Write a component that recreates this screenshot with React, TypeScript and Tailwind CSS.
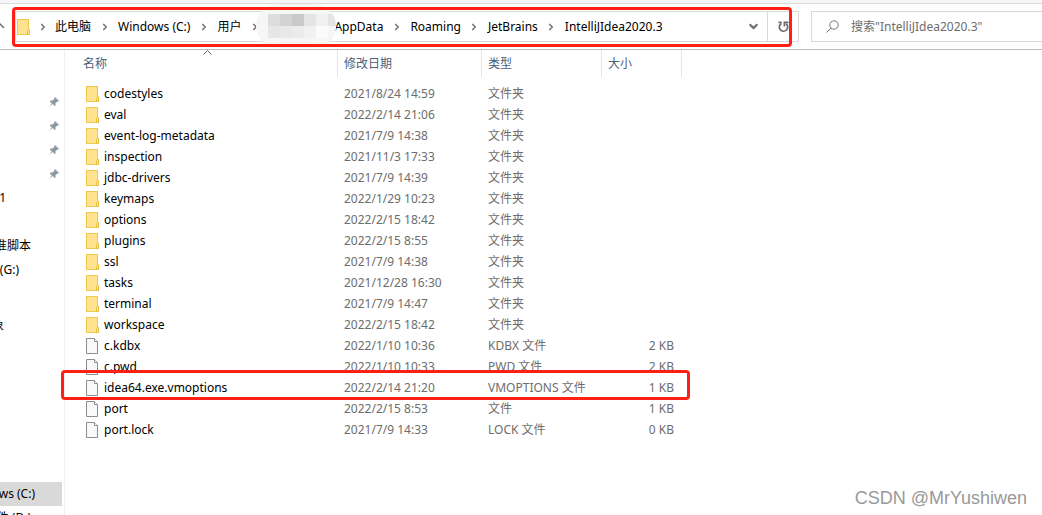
import React from 'react';
import { ChevronDown, ChevronRight } from 'lucide-react';

interface FileItem {
  name: string;
  date: string;
  type: string;
  size?: string;
  isFolder?: boolean;
  marked?: boolean;
}

const folder = (name: string, date: string): FileItem => ({ name, date, type: '文件夹', isFolder: true });

const files: FileItem[] = [
  folder('codestyles', '2021/8/24 14:59'),
  folder('eval', '2022/2/14 21:06'),
  folder('event-log-metadata', '2021/7/9 14:38'),
  folder('inspection', '2021/11/3 17:33'),
  folder('jdbc-drivers', '2021/7/9 14:39'),
  folder('keymaps', '2022/1/29 10:23'),
  folder('options', '2022/2/15 18:42'),
  folder('plugins', '2022/2/15 8:55'),
  folder('ssl', '2021/7/9 14:38'),
  folder('tasks', '2021/12/28 16:30'),
  folder('terminal', '2021/7/9 14:47'),
  folder('workspace', '2022/2/15 18:42'),
  { name: 'c.kdbx', date: '2022/1/10 10:36', type: 'KDBX 文件', size: '2 KB' },
  { name: 'c.pwd', date: '2022/1/10 10:33', type: 'PWD 文件', size: '2 KB' },
  { name: 'idea64.exe.vmoptions', date: '2022/2/14 21:20', type: 'VMOPTIONS 文件', size: '1 KB', marked: true },
  { name: 'port', date: '2022/2/15 8:53', type: '文件', size: '1 KB' },
  { name: 'port.lock', date: '2021/7/9 14:33', type: 'LOCK 文件', size: '0 KB' },
];

// shades of the pixelated user name, row by row
const mosaic = [
  '#dddddd', '#d3d3d3', '#c9c9c9', '#e4e4e4', '#f1f1f1', '#e4e4e4',
  '#e6e6e6', '#e8e8e8', '#ebebeb', '#f1f1f1', '#fbfbfb', '#f6f6f6',
];

const FolderIcon = () => (
  <svg width="14" height="16" viewBox="0 0 14 16" className="shrink-0">
    <rect x="0.5" y="0.5" width="11" height="15" fill="#ffe38f" stroke="#ecc84e" />
    <path d="M10.5 15.5v-4l1-1h1v5z" fill="#ffe9a5" stroke="#e5bd3f" />
  </svg>
);

const FileIcon = () => (
  <svg width="14" height="16" viewBox="0 0 14 16" className="shrink-0">
    <path d="M0.5 0.5h8l3 3v12h-11z" fill="#f8f9fa" stroke="#8e8e8e" />
    <path d="M8.5 0.5v3h3" fill="#ffffff" stroke="#8e8e8e" />
  </svg>
);

const PinIcon = () => (
  <svg width="10" height="10" viewBox="0 0 10 10" fill="#8d99a3">
    <path d="M6 0l4 4-1 .8-.8-.2-1.8 1.8.2 1.8-.9.9-2.1-2L0 10l2.8-3.6-2-2.1.9-.9 1.8.2 1.9-1.8L5.2.9z" />
  </svg>
);

const Separator = ({ width = 'w-[27px]' }: { width?: string }) => (
  <span className={`flex shrink-0 justify-center text-[#757575] ${width}`}>
    <ChevronRight size={10} strokeWidth={4} />
  </span>
);

const Crumb = ({ label }: { label: string }) => (
  <button className="shrink-0 whitespace-nowrap text-black">{label}</button>
);

const SideItem = ({ label, width, selected }: { label?: string; width?: string; selected?: boolean }) => (
  <li className={`h-6 ${selected ? 'mr-[2px] bg-[#d9d9d9]' : ''}`}>
    {label && (
      <a href="#" className={`flex h-6 items-center justify-end overflow-hidden whitespace-nowrap text-black ${width}`}>
        {label}
      </a>
    )}
  </li>
);

const PinnedItem = () => (
  <li className="flex h-6 items-center justify-end pr-[5px]">
    <PinIcon />
  </li>
);

const AddressBar = () => (
  <div className="relative flex h-[31px] flex-1 items-center border border-[#d9d9d9]">
    <div className="flex flex-1 items-center pl-px">
      <FolderIcon />
      <Separator width="w-6" />
      <Crumb label="此电脑" />
      <Separator />
      <Crumb label="Windows (C:)" />
      <Separator />
      <Crumb label="用户" />
      <Separator />
      <div className="relative h-6 w-[66px] shrink-0">
        <div className="absolute -top-[11px] -left-3 flex h-11 w-20 items-center overflow-hidden rounded-full bg-[#f6f6f6] pl-3">
          <div className="grid shrink-0 grid-cols-6">
            {mosaic.map((shade, i) => (
              <span key={i} className="size-3" style={{ backgroundColor: shade }} />
            ))}
          </div>
        </div>
      </div>
      <Crumb label="AppData" />
      <Separator />
      <Crumb label="Roaming" />
      <Separator />
      <Crumb label="JetBrains" />
      <Separator />
      <Crumb label="IntelliJIdea2020.3" />
    </div>
    <button aria-label="展开" className="flex w-7 justify-center text-[#757575]">
      <ChevronDown size={13} strokeWidth={4} />
    </button>
    <button aria-label="刷新" className="flex h-full w-[31px] items-center justify-center border-l border-[#d9d9d9]">
      <svg width="11" height="12" viewBox="0 0 11 12" fill="none" stroke="#6b6b6b" strokeWidth="1.7">
        <path d="M0.5 1.4h3.2" />
        <path d="M3.4 2.4A4.2 4.2 0 1 0 8 2.7" />
        <path d="M10.5 1.4H6.4v4.2" />
      </svg>
    </button>
    <div className="pointer-events-none absolute -top-[5px] right-[6px] -bottom-[6px] -left-1 rounded-sm border-3 border-[#ff2015]" />
  </div>
);

const FileRow = ({ item }: { item: FileItem }) => (
  <tr className="h-[21px]">
    <td className="relative p-0 pl-[21px] text-black">
      <div className="flex items-center gap-1">
        {item.isFolder ? <FolderIcon /> : <FileIcon />}
        <span>{item.name}</span>
      </div>
      {item.marked && (
        <div className="pointer-events-none absolute -top-[7px] -left-1 h-[30px] w-[629px] rounded-sm border-3 border-[#ff2015]" />
      )}
    </td>
    <td className="p-0 pl-[6px]">{item.date}</td>
    <td className="p-0 pl-[6px]">{item.type}</td>
    <td className="p-0 pr-2 text-right">{item.size}</td>
  </tr>
);

export default function App() {
  return (
    <div className="relative flex h-screen flex-col overflow-hidden bg-white font-['Noto_Sans','Noto_Sans_CJK_SC',sans-serif] text-[12px] leading-4 text-[#6d6d6d]">
      <div className="h-1 shrink-0 border-b border-[#dadbdc] bg-[#f5f6f7]" />

      <header className="flex h-[46px] shrink-0 items-center border-b border-[#bcbcbc]">
        <div className="w-[15px] shrink-0 overflow-hidden text-[#6b6b6b]">
          <svg width="6" height="8" viewBox="0 0 6 8" fill="none" stroke="currentColor" strokeWidth="1.5">
            <path d="M-1 0l5 5" />
          </svg>
        </div>
        <AddressBar />
        <label className="ml-3 flex h-[31px] w-[231px] shrink-0 items-center gap-3 border border-r-0 border-[#d9d9d9] pl-[14px]">
          <svg width="13" height="13" viewBox="0 0 13 13" fill="none" stroke="#7a7a7a" className="shrink-0">
            <circle cx="8" cy="5" r="4.2" />
            <path d="M5 8L.5 12.5" />
          </svg>
          <input
            type="text"
            aria-label="搜索"
            placeholder={'搜索"IntelliJIdea2020.3"'}
            className="min-w-0 flex-1 outline-none placeholder:text-[#6d6d6d]"
          />
        </label>
      </header>

      <div className="flex min-h-0 flex-1">
        <nav className="w-[65px] shrink-0 border-r border-[#f0f0f0] pt-10">
          <ul>
            <PinnedItem />
            <PinnedItem />
            <PinnedItem />
            <PinnedItem />
            <SideItem label="1" width="w-[6px]" />
            <SideItem />
            <SideItem label="标准脚本" width="w-[31px]" />
            <SideItem label="(G:)" width="w-[19px]" />
          </ul>
          <ul className="mt-2">
            <SideItem />
            <SideItem label="对象" width="w-1" />
            <SideItem />
            <SideItem />
            <SideItem />
            <SideItem />
            <SideItem />
            <SideItem />
            <SideItem label="Windows (C:)" width="w-[35px]" selected />
            <SideItem label="软件 (D:)" width="w-[31px]" />
          </ul>
        </nav>

        <main className="flex-1">
          <table className="w-[617px] table-fixed border-separate border-spacing-0 whitespace-nowrap">
            <colgroup>
              <col className="w-[273px]" />
              <col className="w-36" />
              <col className="w-30" />
              <col className="w-20" />
            </colgroup>
            <thead className="text-left text-[#4c607a]">
              <tr className="h-[27px]">
                <th className="relative border-r border-[#e5e5e5] p-0 pl-[18px] font-normal">
                  名称
                  <svg width="9" height="5" viewBox="0 0 9 5" fill="none" stroke="#6b6b6b" className="absolute top-0 left-1/2 ml-[2px]">
                    <path d="M.5 4.5l4-4 4 4" />
                  </svg>
                </th>
                <th className="border-r border-[#e5e5e5] p-0 pl-[6px] font-normal">修改日期</th>
                <th className="border-r border-[#e5e5e5] p-0 pl-[6px] font-normal">类型</th>
                <th className="border-r border-[#e5e5e5] p-0 pl-[6px] font-normal">大小</th>
              </tr>
            </thead>
            <tbody className="before:block before:h-[6px]">
              {files.map(item => (
                <FileRow key={item.name} item={item} />
              ))}
            </tbody>
          </table>
        </main>
      </div>

      <div className="absolute right-[15px] bottom-[6px] font-['Liberation_Sans',sans-serif] text-[18px] leading-[22px] text-[#999999]">
        CSDN @MrYushiwen
      </div>
    </div>
  );
}
